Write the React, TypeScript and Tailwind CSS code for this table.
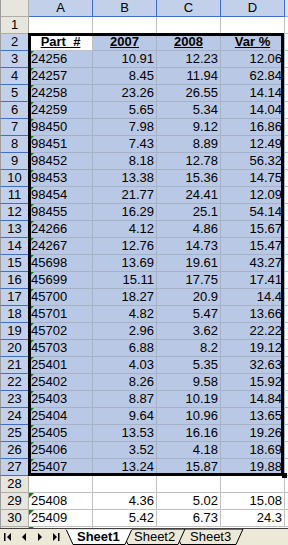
import React from 'react'

// ── Sheet data ─────────────────────────────────────────────────────────────

const DATA: Record<number, [string, string, string, string]> = {
  3: ['24256', '10.91', '12.23', '12.06'],
  4: ['24257', '8.45', '11.94', '62.84'],
  5: ['24258', '23.26', '26.55', '14.14'],
  6: ['24259', '5.65', '5.34', '14.04'],
  7: ['98450', '7.98', '9.12', '16.86'],
  8: ['98451', '7.43', '8.89', '12.49'],
  9: ['98452', '8.18', '12.78', '56.32'],
  10: ['98453', '13.38', '15.36', '14.75'],
  11: ['98454', '21.77', '24.41', '12.09'],
  12: ['98455', '16.29', '25.1', '54.14'],
  13: ['24266', '4.12', '4.86', '15.67'],
  14: ['24267', '12.76', '14.73', '15.47'],
  15: ['45698', '13.69', '19.61', '43.27'],
  16: ['45699', '15.11', '17.75', '17.41'],
  17: ['45700', '18.27', '20.9', '14.4'],
  18: ['45701', '4.82', '5.47', '13.66'],
  19: ['45702', '2.96', '3.62', '22.22'],
  20: ['45703', '6.88', '8.2', '19.12'],
  21: ['25401', '4.03', '5.35', '32.63'],
  22: ['25402', '8.26', '9.58', '15.92'],
  23: ['25403', '8.87', '10.19', '14.84'],
  24: ['25404', '9.64', '10.96', '13.65'],
  25: ['25405', '13.53', '16.16', '19.26'],
  26: ['25406', '3.52', '4.18', '18.69'],
  27: ['25407', '13.24', '15.87', '19.88'],
  29: ['25408', '4.36', '5.02', '15.08'],
  30: ['25409', '5.42', '6.73', '24.3'],
}

const HEADINGS = ['Part  #', '2007', '2008', 'Var %']
const ROWS = Array.from({ length: 30 }, (_, i) => i + 1)

const isSelectedRow = (r: number) => r >= 2 && r <= 27

// ── Pieces ─────────────────────────────────────────────────────────────────

function ColumnHeaders() {
  return (
    <div className="flex h-[17px]">
      <div className="w-[29px] shrink-0 bg-[#e6e5de] border-l border-l-[#9d9d9d] border-r border-b border-[#aeada4]" />
      {['A', 'B', 'C', 'D'].map(c => (
        <div
          key={c}
          className="w-[64px] shrink-0 bg-[#c3d0ea] border-r border-b border-[#3f6fc8] text-center leading-[16px]"
        >
          {c}
        </div>
      ))}
      <div className="flex-1 bg-[#e6e5de] border-b border-[#aeada4]" />
    </div>
  )
}

function RowHeader({ r }: { r: number }) {
  return isSelectedRow(r) ? (
    <div className="w-[29px] shrink-0 bg-[#c3d0ea] border-l border-l-[#9d9d9d] border-r border-b border-[#3f6fc8] text-center leading-[16px]">
      {r}
    </div>
  ) : (
    <div className="w-[29px] shrink-0 bg-[#e6e5de] border-l border-l-[#9d9d9d] border-r border-b border-[#aeada4] text-center leading-[16px]">
      {r}
    </div>
  )
}

function Cell({ r, c }: { r: number; c: number }) {
  const sel = isSelectedRow(r)
  const active = r === 2 && c === 0
  const bg = active ? 'bg-white border-[#c0c0c0]' : sel ? 'bg-[#b9c8e4] border-[#a7b2c6]' : 'bg-white border-[#c0c0c0]'
  const text = r === 2 ? HEADINGS[c] : DATA[r]?.[c] ?? ''
  const align = r === 2 ? 'text-center font-bold underline' : c === 0 ? 'text-left' : 'text-right'
  const flagged = c === 0 && r >= 3 && !!DATA[r]

  return (
    <div className={`relative w-[64px] shrink-0 border-r border-b px-[2px] leading-[16px] whitespace-pre overflow-hidden ${bg} ${align}`}>
      {flagged && (
        <span className="absolute top-0 left-0 w-0 h-0 border-t-[5px] border-r-[5px] border-t-[#0a8a0a] border-r-transparent" />
      )}
      {text}
    </div>
  )
}

function NavButtons() {
  return (
    <div className="flex w-[64px] shrink-0 h-full items-center">
      <div className="w-[16px] flex items-center justify-center">
        <svg width="8" height="8" viewBox="0 0 8 8">
          <rect x="0" y="0" width="1.5" height="8" fill="#000" />
          <polygon points="7,0 3,4 7,8" fill="#000" />
        </svg>
      </div>
      <div className="w-[16px] flex items-center justify-center">
        <svg width="5" height="8" viewBox="0 0 5 8">
          <polygon points="4,0 0,4 4,8" fill="#000" />
        </svg>
      </div>
      <div className="w-[16px] flex items-center justify-center">
        <svg width="5" height="8" viewBox="0 0 5 8">
          <polygon points="0,0 4,4 0,8" fill="#000" />
        </svg>
      </div>
      <div className="w-[16px] flex items-center justify-center">
        <svg width="8" height="8" viewBox="0 0 8 8">
          <polygon points="1,0 5,4 1,8" fill="#000" />
          <rect x="6" y="0" width="1.5" height="8" fill="#000" />
        </svg>
      </div>
    </div>
  )
}

function SheetTabs() {
  return (
    <div className="relative flex h-[17px] bg-[#ece9d8] border-t border-[#404040]">
      {/* tab outlines */}
      <svg className="absolute left-0 top-0 pointer-events-none" width="288" height="16" viewBox="0 0 288 16">
        <polygon points="174,0 181,15.5 236,15.5 243,0" fill="#ece9d8" stroke="#000" strokeWidth="1" />
        <polygon points="121,0 128,15.5 178,15.5 185,0" fill="#ece9d8" stroke="#000" strokeWidth="1" />
        <polygon points="66,0 73,15.5 125,15.5 132,0" fill="#ffffff" stroke="#000" strokeWidth="1" />
        <line x1="66" y1="0" x2="132" y2="0" stroke="#ffffff" strokeWidth="1.5" />
      </svg>
      <NavButtons />
      <div className="relative flex items-center text-[13px] leading-[16px]">
        <span className="ml-[13px] w-[45px] font-bold">Sheet1</span>
        <span className="ml-[12px] w-[44px]">Sheet2</span>
        <span className="ml-[12px]">Sheet3</span>
      </div>
    </div>
  )
}

// ── Component ──────────────────────────────────────────────────────────────

export default function App() {
  return (
    <div className="w-[288px] h-[545px] overflow-hidden bg-white text-black text-[13px] font-['Liberation_Sans',Arial,sans-serif]">
      <div className="relative h-[528px] overflow-hidden">
        <ColumnHeaders />
        {ROWS.map(r => (
          <div key={r} className="flex h-[17px]">
            <RowHeader r={r} />
            {[0, 1, 2, 3].map(c => (
              <Cell key={c} r={r} c={c} />
            ))}
            <div className="flex-1 border-b border-[#c0c0c0] bg-white" />
          </div>
        ))}
        <div className="flex h-[17px]">
          <div className="w-[29px] shrink-0 bg-[#e6e5de] border-l border-l-[#9d9d9d] border-r border-[#aeada4]" />
          <div className="relative w-[64px] shrink-0 border-r border-[#c0c0c0]">
            <span className="absolute top-0 left-0 w-0 h-0 border-t-[5px] border-r-[5px] border-t-[#0a8a0a] border-r-transparent" />
          </div>
        </div>

        {/* selection outline + fill handle */}
        <div className="absolute left-[28px] top-[33px] w-[256px] h-[443px] border-[3px] border-black pointer-events-none" />
        <div className="absolute left-[282px] top-[473px] w-[5px] h-[5px] bg-black pointer-events-none" />
      </div>
      <SheetTabs />
    </div>
  )
}
